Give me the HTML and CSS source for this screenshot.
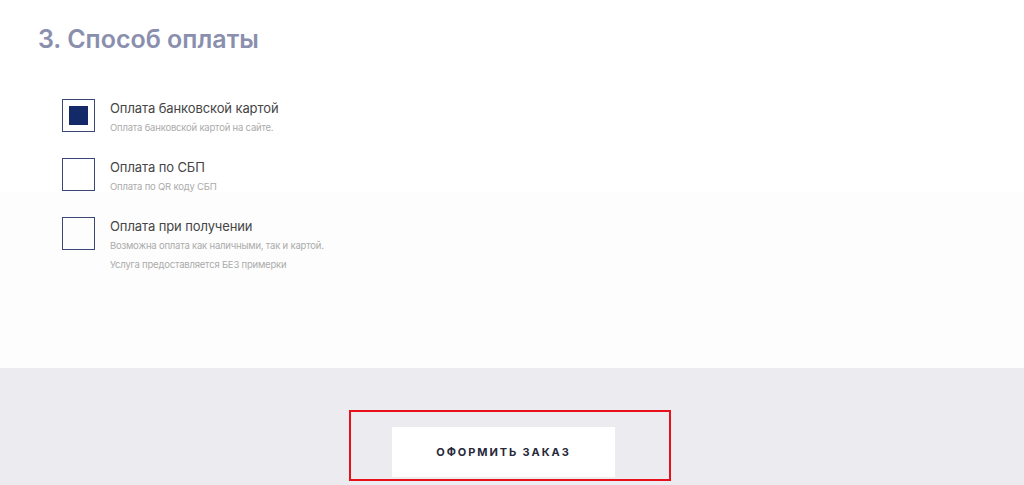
FILE: index.html
```html
<!DOCTYPE html>
<html lang="ru">
<head>
<meta charset="utf-8">
<title>Способ оплаты</title>
<link rel="stylesheet" href="styles.css">
</head>
<body>

<section class="payment">
  <h2 class="payment-title">3. Способ оплаты</h2>

  <div class="options">
    <label class="option">
      <span class="check is-checked"><span class="check-mark"></span></span>
      <span class="option-text">
        <span class="option-name">Оплата банковской картой</span>
        <span class="option-note">Оплата банковской картой на сайте.</span>
      </span>
    </label>

    <label class="option">
      <span class="check"></span>
      <span class="option-text">
        <span class="option-name">Оплата по СБП</span>
        <span class="option-note">Оплата по QR коду СБП</span>
      </span>
    </label>

    <label class="option">
      <span class="check"></span>
      <span class="option-text">
        <span class="option-name">Оплата при получении</span>
        <span class="option-note">Возможна оплата как наличными, так и картой.</span>
        <span class="option-note">Услуга предоставляется БЕЗ примерки</span>
      </span>
    </label>
  </div>
</section>

<div class="submit-bar">
  <div class="submit-frame">
    <button class="submit-btn" type="button">ОФОРМИТЬ ЗАКАЗ</button>
  </div>
</div>

</body>
</html>
```

FILE: styles.css
```css
body {
  margin: 0;
  background-color: white;
  font-family: Inter, "Noto Sans", sans-serif;
  overflow: hidden;
}

.payment {
  height: 368px;
  box-sizing: border-box;
  padding: 24px 0 0 38px;
  background: linear-gradient(#ffffff 0, #ffffff 192px, #fdfdfd 192px);
}

.payment-title {
  margin: 0;
  font-size: 25px;
  line-height: 30px;
  font-weight: 600;
  color: #8a8fae;
}

.options {
  display: flex;
  flex-direction: column;
  gap: 22px;
  margin-top: 45px;
  padding-left: 24px;
}

.option {
  display: flex;
  gap: 15px;
  cursor: pointer;
}

.check {
  width: 33px;
  height: 33px;
  box-sizing: border-box;
  flex: none;
  border: 1px solid #3b4873;
  display: flex;
  align-items: center;
  justify-content: center;
}

.check-mark {
  width: 19px;
  height: 19px;
  background-color: #132968;
}

.option-text {
  display: flex;
  flex-direction: column;
  padding-top: 1px;
}

.option-name {
  font-size: 13px;
  line-height: 17px;
  color: #454545;
  letter-spacing: -0.1px;
}

.option-note {
  margin-top: 2px;
  font-size: 9.5px;
  line-height: 17px;
  color: #ababab;
  letter-spacing: -0.2px;
}

.submit-bar {
  height: 117px;
  background-color: #ebebf0;
  display: flex;
  justify-content: center;
}

.submit-frame {
  margin-top: 42px;
  margin-right: 4px;
  width: 322px;
  height: 71px;
  box-sizing: border-box;
  border: 2px solid #e8101a;
  padding: 15px 0 0 41px;
}

.submit-btn {
  width: 223px;
  height: 50px;
  border: none;
  background-color: white;
  font-family: Inter, "Noto Sans", sans-serif;
  font-size: 11px;
  font-weight: 700;
  letter-spacing: 1.9px;
  color: #27293a;
  cursor: pointer;
}
```
